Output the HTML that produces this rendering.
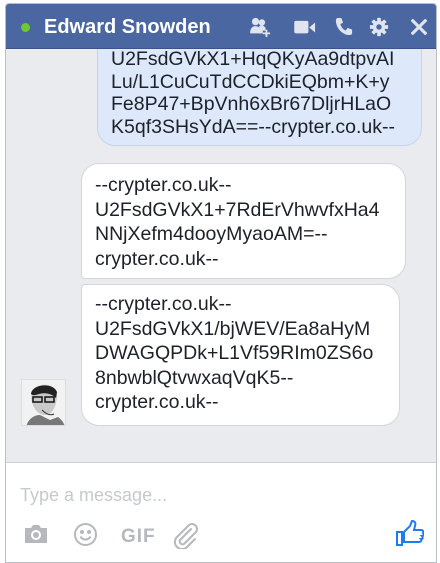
<!DOCTYPE html>
<html><head><meta charset="utf-8">
<style>
*{margin:0;padding:0;box-sizing:border-box}
body{width:440px;height:560px;background:#fff;font-family:"Liberation Sans",Arial,sans-serif;position:relative;overflow:hidden}
.win{position:absolute;left:5px;top:3px;width:432px;height:560px;border:1px solid #b9bec8;border-radius:4px 4px 0 0;background:#e9ebee;overflow:hidden}
.hdr{position:absolute;left:0;top:0;right:0;height:45px;background:#4b67a1;border-bottom:1px solid #3b5488;z-index:2}
.dot{position:absolute;left:15px;top:19px;width:9px;height:9px;border-radius:50%;background:#6ec82e}
.name{position:absolute;left:38px;top:12px;color:#fff;font-weight:bold;font-size:20px}
.b{position:absolute;font-size:19.5px;line-height:24.5px;color:#1d2129;padding:0 13px;border:1px solid #d3d6db;white-space:nowrap}
.b1{left:91px;top:-10px;width:325px;height:152px;background:#dde9fb;border-color:#c6d4ea;border-radius:18px;padding-top:53px;line-height:22.5px}
.b2{left:75px;top:159px;width:325px;height:116px;background:#fff;border-radius:18px 18px 18px 4px;padding-top:9px}
.b3{left:75px;top:280px;width:319px;height:142px;background:#fff;border-radius:4px 18px 18px 18px;padding-top:7px}
.av{position:absolute;left:15px;top:375px;width:45px;height:47px;background:#eee;border:1px solid #ddd;overflow:hidden}
.foot{position:absolute;left:0;top:458px;right:0;bottom:0;background:#fff;border-top:1px solid #cdd0d6}
.ph{position:absolute;left:14px;top:22px;font-size:18px;color:#c6c9cf}
.gif{position:absolute;left:115px;top:63px;font-size:19px;font-weight:bold;color:#b5b8bd;letter-spacing:1px}
</style></head><body>
<div class="win">
 <div class="hdr">
  <div class="dot"></div>
  <div class="name">Edward Snowden</div>
  <svg style="position:absolute;left:244px;top:13px" width="22" height="20" viewBox="0 0 24 22" fill="#dfe4ee"><circle cx="6" cy="5" r="4"/><path d="M0 18c0-6 3-8 6-8s6 2 6 8z"/><circle cx="13" cy="6" r="3.5"/><path d="M10 10c2-1 5-1 7 2v3h-3v3h-4z"/><path d="M17 14h2v3h3v2h-3v3h-2v-3h-3v-2h3z"/></svg>
  <svg style="position:absolute;left:287px;top:16px" width="25" height="15" viewBox="0 0 27 18" fill="#dfe4ee"><rect x="0" y="1" width="17" height="15" rx="2"/><path d="M18 9l7-6v12z"/></svg>
  <svg style="position:absolute;left:329px;top:13px" width="18" height="19" viewBox="0 0 20 21" fill="#dfe4ee"><path d="M3 1l4 0 2 5-3 2c1 3 3 6 6 7l2-3 5 2v4c0 1-1 2-3 2C8 20 1 12 1 4 1 2 2 1 3 1z"/></svg>
  <svg style="position:absolute;left:363px;top:13px" width="20" height="20" viewBox="0 0 22 22"><g fill="#dfe4ee"><circle cx="11" cy="11" r="7"/><g stroke="#dfe4ee" stroke-width="4"><line x1="11" y1="1" x2="11" y2="21"/><line x1="1" y1="11" x2="21" y2="11"/><line x1="4" y1="4" x2="18" y2="18"/><line x1="18" y1="4" x2="4" y2="18"/></g></g><circle cx="11" cy="11" r="3" fill="#4b67a1"/></svg>
  <svg style="position:absolute;left:405px;top:15px" width="16" height="16" viewBox="0 0 18 18" stroke="#dfe4ee" stroke-width="3.5" stroke-linecap="square"><line x1="2" y1="2" x2="16" y2="16"/><line x1="16" y1="2" x2="2" y2="16"/></svg>
 </div>
 <div class="b b1">U2FsdGVkX1+HqQKyAa9dtpvAI<br>Lu/L1CuCuTdCCDkiEQbm+K+y<br>Fe8P47+BpVnh6xBr67DljrHLaO<br>K5qf3SHsYdA==--crypter.co.uk--</div>
 <div class="b b2">--crypter.co.uk--<br>U2FsdGVkX1+7RdErVhwvfxHa4<br>NNjXefm4dooyMyaoAM=--<br>crypter.co.uk--</div>
 <div class="b b3">--crypter.co.uk--<br>U2FsdGVkX1/bjWEV/Ea8aHyM<br>DWAGQPDk+L1Vf59RIm0ZS6o<br>8nbwblQtvwxaqVqK5--<br>crypter.co.uk--</div>
 <div class="av"><svg width="45" height="47" viewBox="0 0 45 47"><rect width="45" height="47" fill="#f2f2f2"/><path d="M10 12c2-8 18-10 23-3 3 4 2 10 1 14-2 8-6 12-11 12s-10-4-12-10c-2-4-2-9-1-13z" fill="#c9c9c9"/><path d="M9 14c1-10 22-12 26-2l-1 6c-4-4-10-6-17-4-3 1-6 2-8 0z" fill="#222"/><rect x="11" y="17" width="9" height="5" fill="none" stroke="#111" stroke-width="1.5"/><rect x="23" y="17" width="9" height="5" fill="none" stroke="#111" stroke-width="1.5"/><path d="M4 47c2-8 8-12 14-12l10 5 8-3c4 3 6 6 7 10z" fill="#777"/><path d="M20 30c4 4 8 6 12 4" stroke="#333" fill="none"/></svg></div>
 <div class="foot">
  <div class="ph">Type a message...</div>
  <svg style="position:absolute;left:17px;top:60px" width="26" height="22" viewBox="0 0 26 22"><path d="M2 5h6l2-3h6l2 3h6v15H2z" fill="#b5b8bd"/><circle cx="13" cy="12" r="5" fill="#fff"/><circle cx="13" cy="12" r="3" fill="#b5b8bd"/></svg>
  <svg style="position:absolute;left:67px;top:59px" width="25" height="25" viewBox="0 0 25 25" fill="none" stroke="#b5b8bd" stroke-width="2"><circle cx="12.5" cy="12.5" r="10.5"/><circle cx="9" cy="10" r="1" fill="#b5b8bd"/><circle cx="16" cy="10" r="1" fill="#b5b8bd"/><path d="M7.5 14.5c2 4 8 4 10 0"/></svg>
  <div class="gif">GIF</div>
  <svg style="position:absolute;left:165px;top:58px" width="28" height="28" viewBox="0 0 28 28" fill="none" stroke="#b5b8bd" stroke-width="2" stroke-linecap="round"><path d="M20 8L9 19a3 3 0 0 0 4 4l12-12a5 5 0 0 0-7-7L6 16a7 7 0 0 0 10 10l8-8"/></svg>
  <svg style="position:absolute;left:390px;top:57px" width="28" height="27" viewBox="0 0 28 27" fill="none" stroke="#1f7bf2" stroke-width="2"><rect x="1" y="12" width="5" height="13"/><path d="M8 12l6-6 2-5c3 0 4 2 3 5l-1 4h7c2 0 3 2 2 3 1 1 1 3-1 3 1 1 1 3-1 3 1 1 0 3-2 3H8z"/></svg>
 </div>
</div>
</body></html>
